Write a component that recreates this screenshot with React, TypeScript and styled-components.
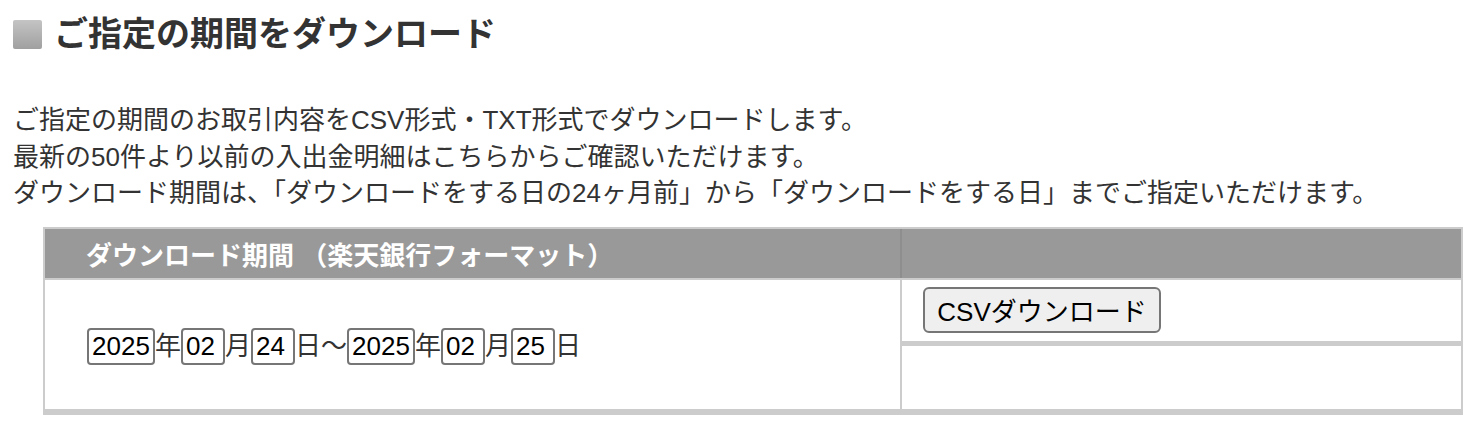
import React from "react";
import styled, { createGlobalStyle } from "styled-components";

const GlobalStyle = createGlobalStyle`
  html, body {
    margin: 0;
    padding: 0;
    background: #ffffff;
  }
  body {
    font-family: "Liberation Sans", "Noto Sans CJK JP", sans-serif;
    color: #333333;
  }
`;

const Page = styled.div`
  padding: 10px 0 0 13px;
  width: 1469px;
  box-sizing: border-box;
`;

const Heading = styled.h2`
  display: flex;
  align-items: center;
  gap: 12px;
  margin: 0;
  height: 48px;
  font-size: 34px;
  font-weight: 700;
  color: #333333;
  line-height: 48px;
`;

const HeadingMark = styled.span`
  display: block;
  width: 29px;
  height: 29px;
  border-radius: 2px;
  background: linear-gradient(#c4c4c4, #a0a0a0);
  flex: none;
`;

const Description = styled.div`
  margin-top: 44px;
  font-size: 26px;
  line-height: 36.5px;
  color: #333333;
`;

const Line = styled.p`
  margin: 0;
  white-space: nowrap;
`;

const Frame = styled.div`
  margin: 15px 0 0 30px;
  width: 1420px;
  box-sizing: border-box;
  border: 2px solid #cccccc;
  border-bottom-width: 6px;
  display: grid;
  grid-template-columns: 857px 559px;
  grid-template-rows: 51px 66px 63px;
`;

const HeadCell = styled.div<{ $divider?: boolean }>`
  background: #999999;
  border-bottom: 2px solid #cccccc;
  box-shadow: ${(p) => (p.$divider ? "inset -2px 0 0 #8e8e8e" : "none")};
  color: #ffffff;
  font-size: 26px;
  font-weight: 700;
  display: flex;
  align-items: center;
  padding-left: 41px;
  box-sizing: border-box;
  white-space: nowrap;
`;

const DateCell = styled.div`
  grid-row: 2 / span 2;
  border-right: 2px solid #cccccc;
  display: flex;
  align-items: center;
  padding: 4px 0 0 42px;
  box-sizing: border-box;
  font-size: 26px;
  color: #333333;
  white-space: nowrap;
`;

const ActionCell = styled.div<{ $ruled?: boolean }>`
  border-bottom: ${(p) => (p.$ruled ? "5px solid #cccccc" : "none")};
  padding: 7px 0 0 21px;
  box-sizing: border-box;
`;

const DateInput = styled.input<{ $wide?: boolean }>`
  width: ${(p) => (p.$wide ? "68px" : "44px")};
  height: 37px;
  box-sizing: border-box;
  border: 2px solid #767676;
  border-radius: 4px;
  padding: 0 3px;
  margin: 0;
  font-family: "Liberation Sans", sans-serif;
  font-size: 26px;
  color: #000000;
  background: #ffffff;
  outline: none;
`;

const Unit = styled.span`
  display: inline-block;
  font-size: 26px;
  line-height: 36px;
`;

const DownloadButton = styled.button`
  width: 238px;
  height: 46px;
  box-sizing: border-box;
  border: 2px solid #767676;
  border-radius: 6px;
  background: #efefef;
  color: #000000;
  font-family: "Liberation Sans", "Noto Sans CJK JP", sans-serif;
  font-size: 26px;
  padding: 0;
  margin: 0;
  cursor: pointer;
`;

export default function App() {
  return (
    <>
      <GlobalStyle />
      <Page>
        <Heading>
          <HeadingMark />
          ご指定の期間をダウンロード
        </Heading>
        <Description>
          <Line>ご指定の期間のお取引内容をCSV形式・TXT形式でダウンロードします。</Line>
          <Line>最新の50件より以前の入出金明細はこちらからご確認いただけます。</Line>
          <Line>
            ダウンロード期間は、「ダウンロードをする日の24ヶ月前」から「ダウンロードをする日」までご指定いただけます。
          </Line>
        </Description>
        <Frame>
          <HeadCell $divider>ダウンロード期間 （楽天銀行フォーマット）</HeadCell>
          <HeadCell />
          <DateCell>
            <DateInput $wide defaultValue="2025" maxLength={4} />
            <Unit>年</Unit>
            <DateInput defaultValue="02" maxLength={2} />
            <Unit>月</Unit>
            <DateInput defaultValue="24" maxLength={2} />
            <Unit>日～</Unit>
            <DateInput $wide defaultValue="2025" maxLength={4} />
            <Unit>年</Unit>
            <DateInput defaultValue="02" maxLength={2} />
            <Unit>月</Unit>
            <DateInput defaultValue="25" maxLength={2} />
            <Unit>日</Unit>
          </DateCell>
          <ActionCell $ruled>
            <DownloadButton type="button">CSVダウンロード</DownloadButton>
          </ActionCell>
          <ActionCell />
        </Frame>
      </Page>
    </>
  );
}
